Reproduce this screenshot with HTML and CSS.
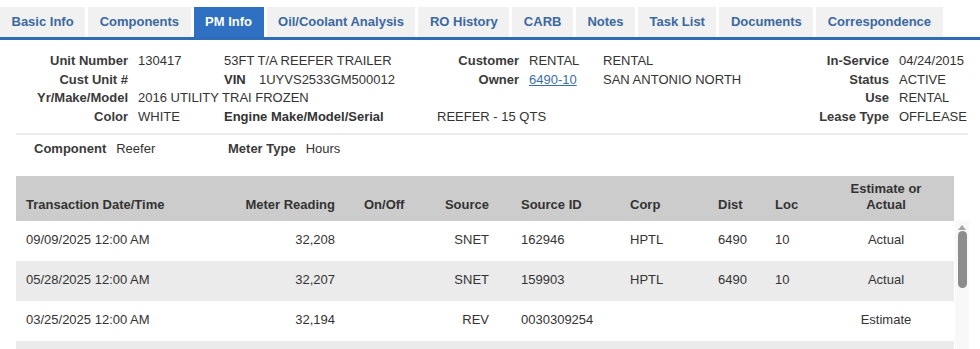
FILE: index.html
```html
<!DOCTYPE html>
<html>
<head>
<meta charset="utf-8">
<title>PM Info</title>
<link rel="stylesheet" href="styles.css">
</head>
<body>
<div class="tabs">
  <div class="tab">Basic Info</div>
  <div class="tab">Components</div>
  <div class="tab active">PM Info</div>
  <div class="tab">Oil/Coolant Analysis</div>
  <div class="tab">RO History</div>
  <div class="tab">CARB</div>
  <div class="tab">Notes</div>
  <div class="tab">Task List</div>
  <div class="tab">Documents</div>
  <div class="tab">Correspondence</div>
</div>

<div class="info">
  <div class="lbl">Unit Number</div>
  <div class="val">130417</div>
  <div class="c3">53FT T/A REEFER TRAILER</div>
  <div class="lbl">Customer</div>
  <div class="val">RENTAL</div>
  <div class="c6">RENTAL</div>
  <div class="lbl">In-Service</div>
  <div class="val">04/24/2015</div>

  <div class="lbl">Cust Unit #</div>
  <div class="val"></div>
  <div class="c3"><span class="b vin">VIN</span>1UYVS2533GM500012</div>
  <div class="lbl">Owner</div>
  <div class="val"><a class="link">6490-10</a></div>
  <div class="c6">SAN ANTONIO NORTH</div>
  <div class="lbl">Status</div>
  <div class="val">ACTIVE</div>

  <div class="lbl">Yr/Make/Model</div>
  <div class="val span2">2016 UTILITY TRAI FROZEN</div>
  <div class="lbl"></div>
  <div class="val"></div>
  <div class="c6"></div>
  <div class="lbl">Use</div>
  <div class="val">RENTAL</div>

  <div class="lbl">Color</div>
  <div class="val">WHITE</div>
  <div class="c3 b">Engine Make/Model/Serial</div>
  <div class="span3">REEFER - 15 QTS</div>
  <div class="lbl">Lease Type</div>
  <div class="val">OFFLEASE</div>
</div>
<div class="sep"></div>

<div class="comp">
  <div class="comp-group"><span class="b">Component</span><span>Reefer</span></div>
  <div class="comp-group"><span class="b">Meter Type</span><span>Hours</span></div>
</div>

<div class="grid-table">
  <div class="thead row">
    <div class="c1">Transaction Date/Time</div>
    <div class="c2">Meter Reading</div>
    <div class="cc3">On/Off</div>
    <div class="c4">Source</div>
    <div class="c5">Source ID</div>
    <div class="cc6">Corp</div>
    <div class="c7">Dist</div>
    <div class="c8">Loc</div>
    <div class="c9">Estimate or<br>Actual</div>
  </div>
  <div class="tbody-wrap">
    <div class="tbody">
      <div class="row tr">
        <div class="c1">09/09/2025 12:00 AM</div>
        <div class="c2">32,208</div>
        <div class="cc3"></div>
        <div class="c4">SNET</div>
        <div class="c5">162946</div>
        <div class="cc6">HPTL</div>
        <div class="c7">6490</div>
        <div class="c8">10</div>
        <div class="c9">Actual</div>
      </div>
      <div class="row tr alt">
        <div class="c1">05/28/2025 12:00 AM</div>
        <div class="c2">32,207</div>
        <div class="cc3"></div>
        <div class="c4">SNET</div>
        <div class="c5">159903</div>
        <div class="cc6">HPTL</div>
        <div class="c7">6490</div>
        <div class="c8">10</div>
        <div class="c9">Actual</div>
      </div>
      <div class="row tr">
        <div class="c1">03/25/2025 12:00 AM</div>
        <div class="c2">32,194</div>
        <div class="cc3"></div>
        <div class="c4">REV</div>
        <div class="c5">0030309254</div>
        <div class="cc6"></div>
        <div class="c7"></div>
        <div class="c8"></div>
        <div class="c9">Estimate</div>
      </div>
      <div class="row tr alt"></div>
    </div>
    <div class="scrollbar">
      <div class="arrow"></div>
      <div class="thumb"></div>
    </div>
  </div>
</div>
</body>
</html>
```

FILE: styles.css
```css
html, body {
  margin: 0;
  padding: 0;
  overflow: hidden;
  background: #fff;
}
body {
  font-family: "Liberation Sans", Arial, sans-serif;
  font-size: 13px;
  color: #333;
  width: 980px;
  height: 349px;
}
.b { font-weight: bold; }

.tabs {
  display: flex;
  gap: 3px;
  padding-top: 7px;
  border-bottom: 3px solid #2f6cb8;
}
.tab {
  height: 30px;
  line-height: 29px;
  padding: 0 11.5px;
  background: #f1f1f1;
  color: #3a68a0;
  font-weight: bold;
  white-space: nowrap;
}
.tab.active {
  background: #2f70c2;
  color: #fff;
}

.info {
  display: grid;
  grid-template-columns: 128px 96px 213px 82px 84px 187px 99px 1fr;
  line-height: 18.7px;
  padding-top: 12px;
  white-space: nowrap;
}
.info .lbl {
  text-align: right;
  font-weight: bold;
  color: #3a3a3a;
}
.info .val { padding-left: 10px; }
.info .val.span2 { grid-column: span 2; }
.info .span3 { grid-column: span 3; }
.info .c6 { padding-left: 0; }
.vin { display: inline-block; width: 35px; }
.link {
  color: #3b6fa8;
  text-decoration: underline;
}

.sep {
  height: 2px;
  background: #ececec;
  margin: 6px 12px 0 16px;
}

.comp {
  display: flex;
  padding: 5px 0 0 34px;
  line-height: 18px;
  color: #333;
}
.comp-group {
  display: flex;
  gap: 10px;
  width: 194px;
}
.comp-group .b { color: #3a3a3a; }

.grid-table {
  margin: 18px 0 0 16px;
}
.row {
  display: grid;
  grid-template-columns: 220px 109px 85px 69px 121px 88px 57px 53px 136px;
  width: 938px;
}
.thead {
  background: #cccccc;
  height: 45px;
  box-sizing: border-box;
  align-items: end;
  padding-bottom: 8px;
  line-height: 16px;
  font-weight: bold;
  color: #333;
}
.c1 { padding-left: 10px; }
.c2 { text-align: right; padding-right: 10px; }
.cc3 { padding-left: 19px; }
.c4 { text-align: right; padding-right: 10px; }
.c5 { padding-left: 22px; }
.cc6 { padding-left: 10px; }
.c7 { padding-left: 10px; }
.c8 { padding-left: 10px; }
.c9 { text-align: center; }

.tbody-wrap {
  display: flex;
  height: 128px;
  overflow: hidden;
}
.tbody { width: 938px; }
.tr {
  height: 40px;
  line-height: 38px;
  white-space: nowrap;
}
.tr.alt { background: #ebebeb; }

.scrollbar {
  width: 14px;
  margin-left: 1px;
  background: #f8f8f8;
  display: flex;
  flex-direction: column;
  align-items: center;
}
.arrow {
  width: 0;
  height: 0;
  margin-top: 4px;
  border-left: 4px solid transparent;
  border-right: 4px solid transparent;
  border-bottom: 5px solid #a3a3a3;
}
.thumb {
  width: 9px;
  height: 57px;
  margin-top: 1px;
  border-radius: 5px;
  background: #8c8c8c;
}
```
